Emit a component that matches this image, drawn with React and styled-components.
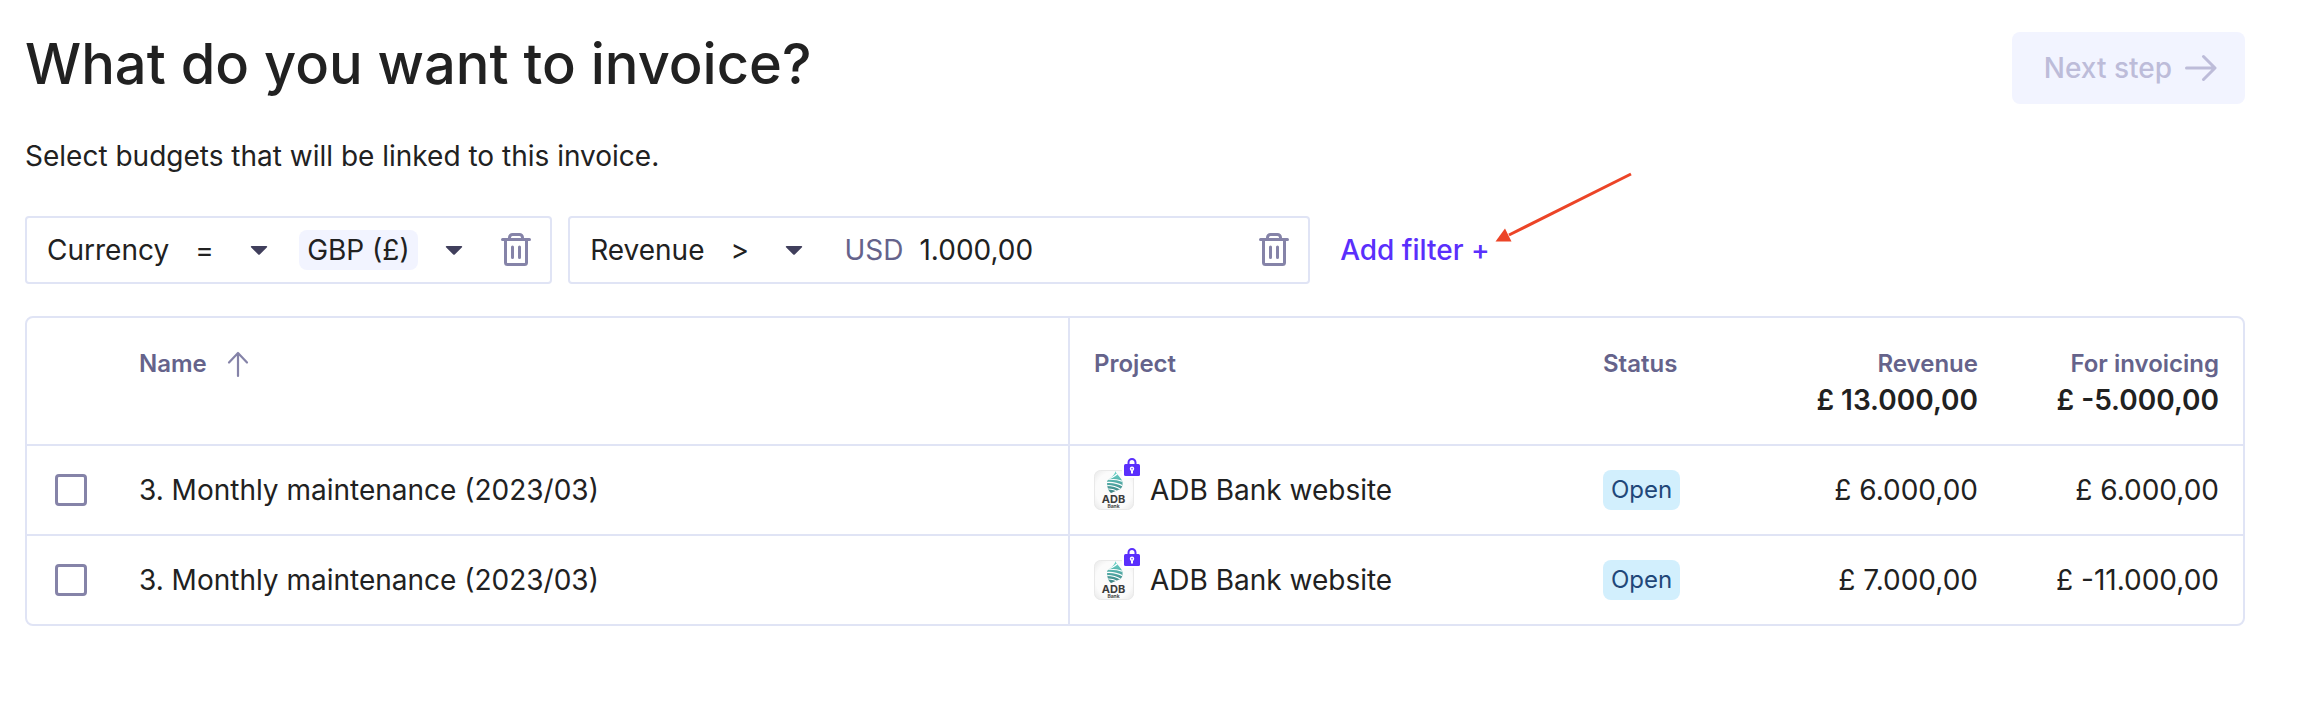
import React, { useState } from "react";
import styled, { createGlobalStyle } from "styled-components";

const GlobalStyle = createGlobalStyle`
  *, *::before, *::after { box-sizing: border-box; }
  body {
    margin: 0;
    background: #fff;
    color: #212121;
    font-family: Inter, "Liberation Sans", sans-serif;
    font-size: 28px;
    line-height: 40px;
  }
  button, input, select { font: inherit; color: inherit; }
`;

const Page = styled.main`
  padding: 32px 63px 32px 25px;
`;

const Header = styled.header`
  display: flex;
  justify-content: space-between;
  align-items: flex-start;
  margin-bottom: 32px;
`;

const Title = styled.h1`
  margin: 0;
  font-size: 56px;
  font-weight: 500;
  line-height: 64px;
`;

const Intro = styled.p`
  margin: 0 0 40px;
`;

const NextButton = styled.button`
  display: flex;
  align-items: center;
  gap: 13px;
  height: 72px;
  padding: 0 28px 0 32px;
  border: 0;
  border-radius: 8px;
  background: #f2f4ff;
  color: #bdbcd9;
  font-weight: 500;
`;

const FilterBar = styled.div`
  display: flex;
  align-items: center;
  gap: 16px;
  margin-bottom: 32px;
`;

const Filter = styled.div`
  display: flex;
  align-items: center;
  width: ${(p) => (p.$wide ? "742px" : "auto")};
  height: 68px;
  padding: 0 18px 0 20px;
  border: 2px solid #e0e4f5;
  border-radius: 4px;
`;

const OperatorField = styled.span`
  display: grid;
  align-items: center;
  margin-left: 26px;

  & > * { grid-area: 1 / 1; }
  & > svg { justify-self: end; pointer-events: none; }
`;

const OperatorSelect = styled.select`
  appearance: none;
  width: 76px;
  height: 40px;
  padding: 0;
  border: 0;
  background: transparent;
`;

const ValueField = styled.span`
  display: flex;
  align-items: center;
  gap: 24px;
  margin-left: 28px;
`;

const ChipSelect = styled.select`
  appearance: none;
  height: 40px;
  padding: 0 8px;
  border: 0;
  border-radius: 8px;
  background: #f2f4ff;
`;

const AmountField = styled.label`
  display: flex;
  flex: 1;
  gap: 16px;
  min-width: 0;
  margin-left: 38px;
  color: #65638b;
`;

const AmountInput = styled.input`
  flex: 1;
  min-width: 0;
  height: 40px;
  padding: 0;
  border: 0;
  background: transparent;
  color: #212121;
`;

const IconButton = styled.button`
  display: flex;
  margin-left: 34px;
  padding: 0;
  border: 0;
  background: transparent;
  color: #8583a8;
`;

const AddFilter = styled.div`
  position: relative;
  margin-left: 14px;
  white-space: nowrap;
`;

const AddFilterButton = styled.button`
  padding: 0;
  border: 0;
  background: transparent;
  color: #5a2ffc;
  font-weight: 500;
`;

const Pointer = styled.svg`
  position: absolute;
  left: 100%;
  bottom: 26px;
  margin-left: 4px;
  pointer-events: none;
`;

const Table = styled.table`
  width: 100%;
  table-layout: fixed;
  border: 2px solid #e0e4f5;
  border-radius: 8px;
  border-collapse: separate;
  border-spacing: 0;
`;

const Col = styled.col`
  width: ${(p) => p.$width};
`;

const HeadCell = styled.th`
  height: 126px;
  padding: 28px 24px 0;
  border-right: ${(p) => (p.$divider ? "2px solid #e0e4f5" : "0")};
  color: #65638b;
  font-size: 24px;
  font-weight: 600;
  line-height: 36px;
  text-align: ${(p) => (p.$numeric ? "right" : "left")};
  vertical-align: top;
`;

const SortButton = styled.button`
  display: flex;
  align-items: center;
  gap: 20px;
  padding: 0;
  border: 0;
  background: transparent;
`;

const Total = styled.div`
  color: #212121;
  font-size: 28px;
`;

const Cell = styled.td`
  height: 90px;
  padding: 0 24px;
  border-top: 2px solid #e0e4f5;
  border-right: ${(p) => (p.$divider ? "2px solid #e0e4f5" : "0")};
  text-align: ${(p) => (p.$numeric ? "right" : "left")};
  white-space: nowrap;
`;

const Checkbox = styled.input`
  appearance: none;
  display: block;
  width: 32px;
  height: 32px;
  margin: 0 0 0 4px;
  border: 3px solid #8583a8;
  border-radius: 4px;

  &:checked { background: #5a2ffc; }
`;

const Project = styled.div`
  display: flex;
  align-items: center;
  gap: 16px;
`;

const Avatar = styled.span`
  position: relative;
  display: flex;
`;

const LockBadge = styled.svg`
  position: absolute;
  top: -14px;
  right: -9px;
`;

const StatusTag = styled.div`
  width: fit-content;
  padding: 0 8px;
  border-radius: 8px;
  background: #d2effd;
  color: #1f4779;
  font-size: 24px;
`;

const Caret = () => (
  <svg width="24" height="24" viewBox="0 0 24 24" aria-hidden="true">
    <path d="M4.500 8h15a.7.7 0 0 1 .5 1.200l-7 7a1.400 1.400 0 0 1-2 0l-7-7a.7.7 0 0 1 .5-1.200z" fill="#403f5c" />
  </svg>
);

const Trash = () => (
  <svg width="32" height="36" viewBox="0 0 32 36" fill="none" stroke="currentColor" strokeWidth="3" strokeLinecap="round" aria-hidden="true">
    <path d="M2.500 7.500h27" />
    <path d="M5.500 8v22.500a2 2 0 0 0 2 2h17a2 2 0 0 0 2-2V8" />
    <path d="M9.500 7V5.500a3 3 0 0 1 3-3h7a3 3 0 0 1 3 3V7" />
    <path d="M12.500 15v10.500M19.500 15v10.500" />
  </svg>
);

const ArrowRight = () => (
  <svg width="32" height="32" viewBox="0 0 32 32" fill="none" stroke="currentColor" strokeWidth="3" strokeLinecap="round" strokeLinejoin="round" aria-hidden="true">
    <path d="M1.500 16h28M18.500 4.500 30 16 18.500 27.500" />
  </svg>
);

const ArrowUp = () => (
  <svg width="22" height="28" viewBox="0 0 22 28" fill="none" stroke="#8583a8" strokeWidth="2.200" strokeLinecap="round" strokeLinejoin="round" aria-hidden="true">
    <path d="M11 26V3M2 12.500 11 3l9 9.500" />
  </svg>
);

const BankLogo = () => (
  <svg width="40" height="40" viewBox="0 0 40 40" role="img" aria-label="ADB Bank">
    <defs>
      <linearGradient id="leaf" x1="0" y1="0" x2="0" y2="1">
        <stop offset="0" stopColor="#6fdcd0" />
        <stop offset="1" stopColor="#3a7f80" />
      </linearGradient>
      <radialGradient id="tile" cx=".5" cy=".5" r=".72">
        <stop offset=".65" stopColor="#fbfbfb" />
        <stop offset="1" stopColor="#e6e6e6" />
      </radialGradient>
      <clipPath id="leafShape">
        <path d="M21.500 1c.5 3 6 7 7 10.500.4 4-.5 6-2 7.500L17 23c-3-2.500-4-6-4-12 3-3 7.500-5 8.500-10z" />
      </clipPath>
    </defs>
    <rect x=".5" y=".5" width="39" height="39" rx="6" fill="url(#tile)" stroke="#e9e9e9" />
    <g clipPath="url(#leafShape)">
      <rect x="12" width="18" height="24" fill="url(#leaf)" />
      <path d="M13 9q6-1 10-5M12 9.500q9-1 17 2M12 12.500q9-1 17 3.500M13 15.500q8 0 14 4M14 19q6 0 10 3" stroke="#fff" strokeWidth="1.200" fill="none" />
    </g>
    <text x="19.500" y="33" textAnchor="middle" fontSize="11" fontWeight="700" fill="#3c3c3c">ADB</text>
    <text x="19.500" y="38" textAnchor="middle" fontSize="5" fontWeight="700" fill="#444">Bank</text>
  </svg>
);

const Lock = () => (
  <LockBadge width="22" height="24" viewBox="0 0 22 24" aria-hidden="true">
    <rect x="1" y="6" width="20" height="16" rx="2" fill="#fff" />
    <path d="M7.500 9V6.500a3.500 3.500 0 0 1 7 0V9" fill="none" stroke="#5a2ffc" strokeWidth="2" />
    <rect x="3" y="8" width="16" height="12" rx="1.500" fill="#5a2ffc" />
    <circle cx="11" cy="12.800" r="1.500" fill="none" stroke="#fff" strokeWidth="1.500" />
    <path d="M11 14.500v3" stroke="#fff" strokeWidth="2" />
  </LockBadge>
);

const budgets = [
  { id: 1, name: "3. Monthly maintenance (2023/03)", project: "ADB Bank website", status: "Open", revenue: "£ 6.000,00", invoicing: "£ 6.000,00" },
  { id: 2, name: "3. Monthly maintenance (2023/03)", project: "ADB Bank website", status: "Open", revenue: "£ 7.000,00", invoicing: "£ -11.000,00" },
];

const Operator = ({ label, value }) => (
  <OperatorField>
    <OperatorSelect aria-label={label} defaultValue={value}>
      <option>{value}</option>
    </OperatorSelect>
    <Caret />
  </OperatorField>
);

export default function App() {
  const [amount, setAmount] = useState("1.000,00");
  return (
    <>
      <GlobalStyle />
      <Page>
        <Header>
          <Title>What do you want to invoice?</Title>
          <NextButton type="button" disabled>
            Next step
            <ArrowRight />
          </NextButton>
        </Header>
        <Intro>Select budgets that will be linked to this invoice.</Intro>

        <FilterBar>
          <Filter>
            <span>Currency</span>
            <Operator label="Currency operator" value="=" />
            <ValueField>
              <ChipSelect aria-label="Currency" defaultValue="GBP (£)">
                <option>GBP (£)</option>
              </ChipSelect>
              <Caret />
            </ValueField>
            <IconButton type="button" aria-label="Remove currency filter">
              <Trash />
            </IconButton>
          </Filter>
          <Filter $wide>
            <span>Revenue</span>
            <Operator label="Revenue operator" value=">" />
            <AmountField>
              USD
              <AmountInput value={amount} onChange={(e) => setAmount(e.target.value)} />
            </AmountField>
            <IconButton type="button" aria-label="Remove revenue filter">
              <Trash />
            </IconButton>
          </Filter>
          <AddFilter>
            <AddFilterButton type="button">Add filter +</AddFilterButton>
            <Pointer width="138" height="72" viewBox="0 0 138 72" aria-hidden="true">
              <path d="M137 2 15 63" stroke="#ec4427" strokeWidth="3" />
              <path d="M1.500 69.500 11 56.500l6.500 13z" fill="#ec4427" />
            </Pointer>
          </AddFilter>
        </FilterBar>

        <Table>
          <colgroup>
            <Col $width="88px" />
            <Col $width="auto" />
            <Col $width="509px" />
            <Col $width="200px" />
            <Col $width="223px" />
            <Col $width="241px" />
          </colgroup>
          <thead>
            <tr>
              <HeadCell aria-label="Selected" />
              <HeadCell $divider aria-sort="ascending">
                <SortButton type="button">
                  Name
                  <ArrowUp />
                </SortButton>
              </HeadCell>
              <HeadCell>Project</HeadCell>
              <HeadCell>Status</HeadCell>
              <HeadCell $numeric>
                Revenue
                <Total>£ 13.000,00</Total>
              </HeadCell>
              <HeadCell $numeric>
                For invoicing
                <Total>£ -5.000,00</Total>
              </HeadCell>
            </tr>
          </thead>
          <tbody>
            {budgets.map((b) => (
              <tr key={b.id}>
                <Cell>
                  <Checkbox type="checkbox" aria-label={`Select ${b.name}`} />
                </Cell>
                <Cell $divider>{b.name}</Cell>
                <Cell>
                  <Project>
                    <Avatar>
                      <BankLogo />
                      <Lock />
                    </Avatar>
                    {b.project}
                  </Project>
                </Cell>
                <Cell>
                  <StatusTag>{b.status}</StatusTag>
                </Cell>
                <Cell $numeric>{b.revenue}</Cell>
                <Cell $numeric>{b.invoicing}</Cell>
              </tr>
            ))}
          </tbody>
        </Table>
      </Page>
    </>
  );
}
